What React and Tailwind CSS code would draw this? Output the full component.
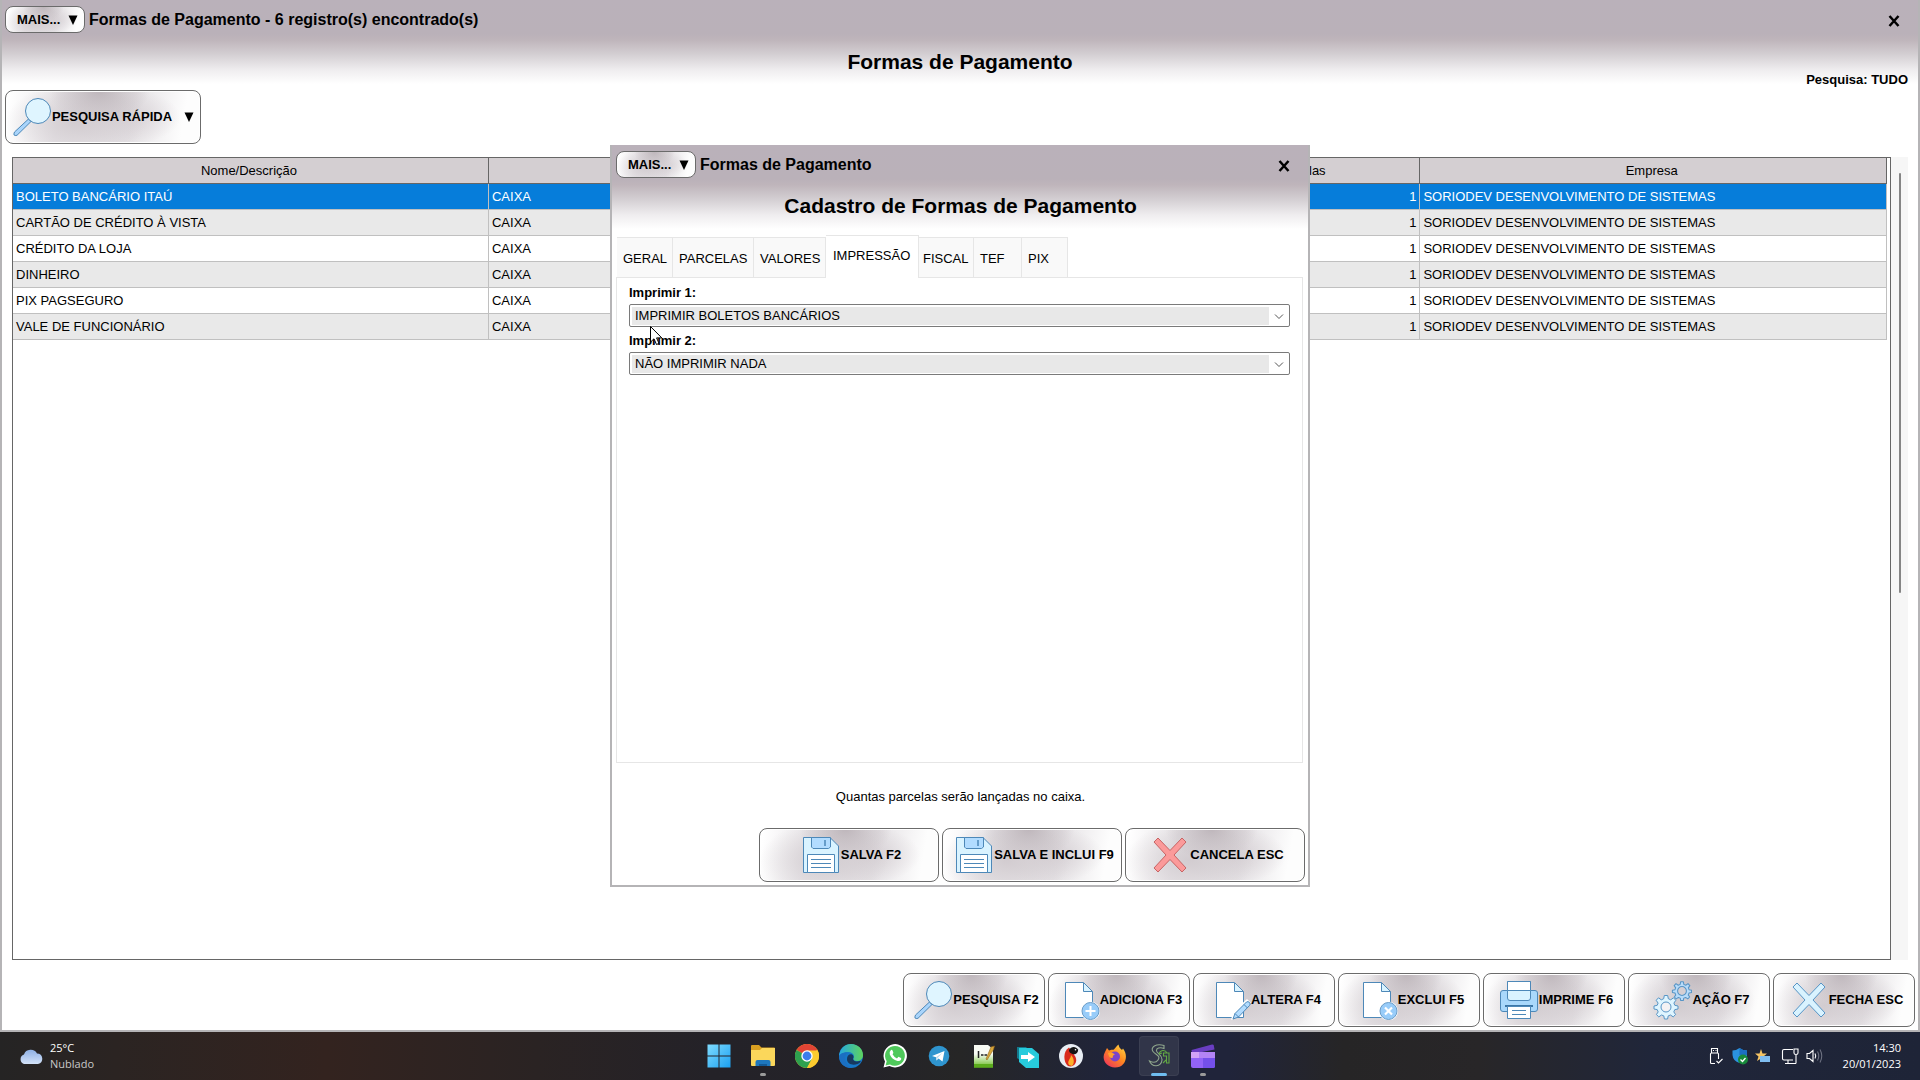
import { useState } from 'react';
import { clsx } from 'clsx';

const GLOSS = 'bg-[radial-gradient(ellipse_26%_60%_at_48%_0%,#beb6bb_0%,transparent_100%),radial-gradient(ellipse_36%_75%_at_36%_60%,#d2ccd0_0%,transparent_100%),radial-gradient(ellipse_30%_55%_at_60%_50%,#d6d0d4_0%,transparent_100%),linear-gradient(100deg,#ffffff_2%,#e9e6e9_28%,#e6e3e6_64%,#fdfdfd_90%)]';
const HEADER_FADE = 'bg-[linear-gradient(#bab1ba_0px,#bab1b9_34px,#bfb5bb_40px,#d3ced2_54px,#efedef_70px,#ffffff_84px)]';

const rows = [
    'BOLETO BANCÁRIO ITAÚ',
    'CARTÃO DE CRÉDITO À VISTA',
    'CRÉDITO DA LOJA',
    'DINHEIRO',
    'PIX PAGSEGURO',
    'VALE DE FUNCIONÁRIO',
];

/* Button icons, all on a 40x40 grid */
const Magnifier = () => (
    <svg viewBox="0 0 40 40" className="size-10 shrink-0">
        <path d="M16.500 22 L2.500 35 Q0.500 39.500 5 38.300 L19 24.500 Z" fill="#a9d4fb" stroke="#4d88b8" strokeWidth="1" />
        <circle cx="26" cy="14" r="12.500" fill="#dff5ff" stroke="#4d88b8" strokeWidth="1" />
    </svg>
);

const Floppy = () => (
    <svg viewBox="0 0 40 40" className="size-10 shrink-0">
        <path d="M2.500 2.500 H29 L37.500 11 V37.500 H2.500 Z" fill="#d9f3ff" stroke="#4d88b8" />
        <path d="M10.500 2.500 H29.500 V12 L27.500 13.500 H12 L10.500 12 Z" fill="#b2dcff" stroke="#4d88b8" />
        <path d="M24 5 V11" stroke="#4d88b8" strokeWidth="1.500" />
        <path d="M6.500 19.500 H33.500 V37.500 H6.500 Z" fill="#ffffff" stroke="#4d88b8" />
        <path d="M10 24.500 H30 M10 28.500 H30 M10 32.500 H30" stroke="#4d88b8" />
    </svg>
);

const Cross = ({ fill, stroke }) => (
    <svg viewBox="0 0 40 40" className="size-10 shrink-0">
        <path
            d="M4 7 L8 3 L20 15.500 L32 3 L36 7 L24 20 L36 33 L32 37 L20 24.500 L8 37 L4 33 L16 20 Z"
            fill={fill}
            stroke={stroke}
            strokeLinejoin="round"
        />
    </svg>
);

const Page = ({ children }) => (
    <svg viewBox="0 0 40 40" className="size-10 shrink-0">
        <path d="M5.500 2.500 H23 L32.500 12 V37.500 H5.500 Z" fill="#ffffff" stroke="#4d88b8" />
        <path d="M23.500 2.500 V11.500 H32.500 Z" fill="#d9f3ff" stroke="#4d88b8" />
        {children}
    </svg>
);

const PageAdd = () => (
    <Page>
        <circle cx="30.500" cy="31" r="9.500" fill="#ffffff" />
        <circle cx="30.500" cy="31" r="8.500" fill="#98ccf9" stroke="#6a9cc7" />
        <path d="M25.500 31 H35.500 M30.500 26 V36" stroke="#ffffff" strokeWidth="2" />
    </Page>
);

const PageEdit = () => (
    <Page>
        <path d="M20 40 L22 32 L36 19 L40 23 L27 37 Z" fill="#ffffff" />
        <path d="M22 39 L24 33.500 L35.500 22 Q37 21 38.500 22.500 Q40 24 38.500 25.500 L27.500 37 Z" fill="#b2dcff" stroke="#4d88b8" />
        <path d="M24 33.500 L27.500 37 M33 24.500 L36.500 28" stroke="#4d88b8" />
    </Page>
);

const PageDelete = () => (
    <Page>
        <circle cx="30.500" cy="31" r="9.500" fill="#ffffff" />
        <circle cx="30.500" cy="31" r="8.500" fill="#98ccf9" stroke="#6a9cc7" />
        <path d="M27 27.500 L34 34.500 M34 27.500 L27 34.500" stroke="#ffffff" strokeWidth="2.200" />
    </Page>
);

const Printer = () => (
    <svg viewBox="0 0 40 40" className="size-10 shrink-0">
        <path d="M4 10.500 H36 Q38.500 10.500 38.500 13 V29 Q38.500 31.500 36 31.500 H4 Q1.500 31.500 1.500 29 V13 Q1.500 10.500 4 10.500 Z" fill="#a9d8fb" stroke="#4d88b8" />
        <path d="M8.500 1.500 H31.500 V18 Q31.500 20.500 29 20.500 H11 Q8.500 20.500 8.500 18 Z" fill="#d9f3ff" stroke="#4d88b8" />
        <path d="M8.500 1.500 H31.500 V10.500 H8.500 Z" fill="#ffffff" stroke="#4d88b8" />
        <path d="M6 26 H34" stroke="#3c76a6" strokeWidth="2" />
        <path d="M8.500 26.500 H31.500 V38.500 H8.500 Z" fill="#ffffff" stroke="#4d88b8" />
        <path d="M13 30.500 H27 M13 34.500 H27" stroke="#4d88b8" />
    </svg>
);

const GEAR = 'M-1.700 -11.500 H1.700 L2.300 -8.300 L4.700 -7.200 L7.500 -9.200 L9.800 -6.700 L7.900 -3.900 L8.800 -1.700 L12 -1 V2 L8.800 2.600 L7.800 4.900 L9.600 7.500 L7.200 9.900 L4.500 8 L2.200 8.900 L1.600 12 H-1.600 L-2.200 8.900 L-4.500 8 L-7.200 9.900 L-9.600 7.500 L-7.800 4.900 L-8.800 2.600 L-12 2 V-1 L-8.800 -1.700 L-7.900 -3.900 L-9.800 -6.700 L-7.500 -9.200 L-4.700 -7.200 L-2.300 -8.300 Z';

const Gears = () => (
    <svg viewBox="0 0 40 40" className="size-10 shrink-0" stroke="#5795c6" strokeLinejoin="round">
        <g transform="translate(14 27)">
            <path d={GEAR} fill="#dff5ff" />
            <circle r="5" fill="#f4f2f4" />
        </g>
        <g transform="translate(30 11) scale(0.800)">
            <path d={GEAR} fill="#b8dcfa" strokeWidth="1.300" />
            <circle r="5.500" fill="#d5cfd3" strokeWidth="1.300" />
        </g>
    </svg>
);

const Arrow = () => (
    <svg viewBox="0 0 10 10" className="size-[10px] shrink-0">
        <path d="M0.500 0.500 H9.500 L5 10 Z" fill="#000000" />
    </svg>
);

const ActionButton = ({ icon, label, menu, className }) => (
    <button
        type="button"
        className={clsx('flex h-[54px] items-center justify-center rounded-lg border border-[#6b6b6b] pl-1 text-[13px] font-bold whitespace-nowrap inset-ring-1 inset-ring-white', GLOSS, className)}
    >
        {icon}
        <span>{label}</span>
        {menu && <span className="mr-1 ml-3"><Arrow /></span>}
    </button>
);

const TitleBar = ({ title }) => (
    <div className="flex items-center justify-between pt-[6px]">
        <div className="flex items-center gap-1">
            <button
                type="button"
                className={clsx('flex h-[27px] w-20 items-center justify-between rounded-lg border border-[#6b6b6b] pr-[6px] pl-[11px] text-[13px] leading-none font-bold', GLOSS)}
            >
                MAIS...
                <Arrow />
            </button>
            <span className="text-base leading-5 font-bold">{title}</span>
        </div>
        <button type="button" aria-label="Fechar" className="mr-[15px] pt-[2px]">
            <svg viewBox="0 0 12 12" className="size-3">
                <path d="M1.500 1 L10.500 11 M10.500 1 L1.500 11" stroke="#000000" strokeWidth="2.500" />
            </svg>
        </button>
    </div>
);

const PrintSelect = ({ id, label, value }) => (
    <div>
        <label htmlFor={id} className="block h-5 text-[13px] leading-[18px] font-bold">{label}</label>
        <div className="mb-[5px] flex h-[23px] items-center rounded-xs border border-[#7a7a7a] bg-white p-[2px]">
            <select id={id} defaultValue={value} className="h-[18px] min-w-0 flex-1 appearance-none bg-[#e8e8e8] pl-[3px] text-[13px] leading-4 outline-none">
                <option>{value}</option>
            </select>
            <svg viewBox="0 0 18 18" className="pointer-events-none size-[18px]" fill="none">
                <path d="M6 7.500 L10 11.500 L14 7.500" stroke="#555555" />
            </svg>
        </div>
    </div>
);

const tabs = [
    { name: 'GERAL', width: 'w-[56px] pl-[6px]' },
    { name: 'PARCELAS', width: 'w-[81px] pl-[6px]' },
    { name: 'VALORES', width: 'w-[72px] pl-[6px]' },
    { name: 'IMPRESSÃO', width: 'w-[93px] pl-[7px]' },
    { name: 'FISCAL', width: 'w-[55px] pl-1' },
    { name: 'TEF', width: 'w-[48px] pl-[6px]' },
    { name: 'PIX', width: 'w-[46px] pl-[6px]' },
];

const FormDialog = () => {
    const [tab, setTab] = useState('IMPRESSÃO');

    return (
        <div role="dialog" aria-label="Formas de Pagamento" className={clsx('relative flex w-[700px] flex-col border-x-2 border-b-2 border-[#b5b4b6] bg-white pr-[3px] pl-1', HEADER_FADE)}>
            <TitleBar title="Formas de Pagamento" />
            <h2 className="mt-4 text-center text-[21px] leading-6 font-bold">Cadastro de Formas de Pagamento</h2>

            {/* Tabs */}
            <div role="tablist" className="mt-[17px] ml-px flex h-[42px] items-end">
                {tabs.map((t) => (
                    <button
                        key={t.name}
                        type="button"
                        role="tab"
                        aria-selected={tab === t.name}
                        onClick={() => setTab(t.name)}
                        className={clsx(
                            'border-t border-r border-[#e6e6e6] text-left text-[13px]',
                            t.width,
                            tab === t.name ? 'z-10 -mb-px h-[43px] bg-white pb-[2px]' : 'h-10 bg-[#f9f9f9] pt-[2px]'
                        )}
                    >
                        {t.name}
                    </button>
                ))}
            </div>
            <div className="mr-[2px] min-h-[486px] border border-[#e6e6e6] px-3 pt-[6px]">
                <PrintSelect id="imprimir1" label="Imprimir 1:" value="IMPRIMIR BOLETOS BANCÁRIOS" />
                <PrintSelect id="imprimir2" label="Imprimir 2:" value="NÃO IMPRIMIR NADA" />
            </div>

            <p className="mt-6 text-center text-[13px] leading-5">Quantas parcelas serão lançadas no caixa.</p>
            <div className="mt-[21px] mb-[3px] flex justify-end gap-[3px]">
                <ActionButton className="w-[180px]" icon={<Floppy />} label="SALVA F2" />
                <ActionButton className="w-[180px]" icon={<Floppy />} label="SALVA E INCLUI F9" />
                <ActionButton className="w-[180px]" icon={<Cross fill="#fb9a9a" stroke="#c76464" />} label="CANCELA ESC" />
            </div>

            {/* Mouse pointer */}
            <svg viewBox="0 0 13 20" className="pointer-events-none absolute top-[181px] left-[38px] h-5 w-[13px]">
                <path d="M0.500 0.500 V16 L4 12.800 L6.500 18.500 L9 17.400 L6.600 11.900 H11.800 Z" fill="#ffffff" stroke="#000000" />
            </svg>
        </div>
    );
};

/* Taskbar icons, all on a 24x24 grid */
const TaskIcon = ({ children }) => (
    <svg viewBox="0 0 24 24" className="size-6">{children}</svg>
);

const apps = [
    {
        name: 'Iniciar',
        icon: (
            <TaskIcon>
                <defs>
                    <linearGradient id="win" x1="0" y1="0" x2="1" y2="1">
                        <stop offset="0" stopColor="#7fdcff" />
                        <stop offset="1" stopColor="#1ba0f0" />
                    </linearGradient>
                </defs>
                <path d="M0.500 0.500 H11.500 V11.500 H0.500 Z M12.500 0.500 H23.500 V11.500 H12.500 Z M0.500 12.500 H11.500 V23.500 H0.500 Z M12.500 12.500 H23.500 V23.500 H12.500 Z" fill="url(#win)" />
            </TaskIcon>
        ),
    },
    {
        name: 'Explorador de Arquivos',
        open: true,
        icon: (
            <TaskIcon>
                <path d="M0 2 Q0 1 1 1 H8 L10.500 3.500 H23 Q24 3.500 24 4.500 V10 H0 Z" fill="#d9a021" />
                <path d="M0 6 H9 L11 4 H24 V21 Q24 22 23 22 H1 Q0 22 0 21 Z" fill="#fbd75b" />
                <path d="M4.500 22 V18 Q4.500 16 6.500 16 H17.500 Q19.500 16 19.500 18 V22 Z" fill="#1e77bd" />
                <path d="M8 22 V20 H16 V22 Z" fill="#135a96" />
            </TaskIcon>
        ),
    },
    {
        name: 'Chrome',
        icon: (
            <TaskIcon>
                <circle cx="12" cy="12" r="12" fill="#fccb2f" />
                <path d="M12 12 L1.600 6 A12 12 0 0 1 22.400 6 Z" fill="#e04434" />
                <path d="M12 12 L1.600 6 A12 12 0 0 0 12 24 L17 15 Z" fill="#2ea14f" />
                <path d="M12 6.500 H22.700 A12 12 0 0 1 12 24 L16.800 15 Z" fill="#fccb2f" />
                <circle cx="12" cy="12" r="5.700" fill="#ffffff" />
                <circle cx="12" cy="12" r="4.400" fill="#3b7ded" />
            </TaskIcon>
        ),
    },
    {
        name: 'Edge',
        icon: (
            <TaskIcon>
                <defs>
                    <linearGradient id="edge" x1="0" y1="0" x2="1" y2="0">
                        <stop offset="0" stopColor="#25a8e0" />
                        <stop offset="1" stopColor="#5fd45c" />
                    </linearGradient>
                </defs>
                <circle cx="12" cy="12" r="12" fill="#1677c8" />
                <path d="M0 12 C1 4 6 0 12 0 C19 0 24 5 24 11 C24 15 21 17 18 17 C15 17 14 16 14.500 14.500 C16 12 14 8 9.500 8 C5 8 1.500 10 0 12 Z" fill="url(#edge)" />
                <path d="M8 15 C8 11.500 10 10 12.500 10.300 C14.500 11 15 13 14 14.800 C14 17 17 18 20.500 17 C21.500 17 22 17.500 21.500 18 C18 22 8 22 8 15 Z" fill="#17395f" />
                <path d="M0 12 C1.500 9 5 8 9 8.500 C4.500 11 4.500 20 13 24 C5 24 0 19 0 12 Z" fill="#1b6fc2" />
            </TaskIcon>
        ),
    },
    {
        name: 'WhatsApp',
        icon: (
            <TaskIcon>
                <path d="M0.500 23.500 L2 17.500 A11.700 11.700 0 1 1 6.500 22 Z" fill="#ffffff" />
                <path d="M2.600 21.500 L3.700 17.300 A9.900 9.900 0 1 1 7 20.400 Z" fill="#4fc95b" />
                <path d="M8 6 Q9 5.500 9.500 6.500 L10.300 8.500 Q10.500 9 9.500 10.200 Q11 13 14 14.400 L15.200 13 Q15.600 12.700 16 12.900 L18 14 Q18.500 14.500 18 15.700 Q17 17.500 14.500 17 Q9 15.500 6.800 10.500 Q6 7.500 8 6 Z" fill="#ffffff" />
            </TaskIcon>
        ),
    },
    {
        name: 'Telegram',
        icon: (
            <TaskIcon>
                <circle cx="12" cy="12" r="10.300" fill="#2f95cf" />
                <path d="M5 12 L17.500 7 L15.500 17.500 L11.500 14.500 L9.500 16.500 L9 13.300 Z" fill="#ffffff" />
                <path d="M9 13.300 L15.500 8.800 L10.600 14 L9.500 16.500 Z" fill="#b9d9ec" />
            </TaskIcon>
        ),
    },
    {
        name: 'Notepad++',
        icon: (
            <TaskIcon>
                <defs>
                    <linearGradient id="npp" x1="0" y1="0" x2="0" y2="1">
                        <stop offset="0.400" stopColor="#f8fbf4" />
                        <stop offset="1" stopColor="#68bd23" />
                    </linearGradient>
                </defs>
                <path d="M3 1 H17 L22 5 V23.500 H3 Z" fill="url(#npp)" />
                <path d="M3 20 H22 V23.500 H3 Z" fill="#5bac1c" />
                <path d="M7.500 7 V14 M10 11 H12.500 M13.500 11 H16" stroke="#222222" strokeWidth="1.500" />
                <path d="M15 15 L20 3 L23.500 2 L22.500 5.500 L16 16 Z" fill="#d8a83c" stroke="#93651b" strokeWidth="0.600" />
            </TaskIcon>
        ),
    },
    {
        name: 'Acesso remoto',
        icon: (
            <TaskIcon>
                <path d="M2 3 H11 L15 7 V18 H7 L2 14 Z" fill="#15788c" />
                <path d="M4 4 H17 L24 10 V24 H11 L4 18 Z" fill="#27cbdc" />
                <path d="M6 11 H13 V8 L20 13 L13 18 V15 H6 Z" fill="#ffffff" />
            </TaskIcon>
        ),
    },
    {
        name: 'Fênix',
        icon: (
            <TaskIcon>
                <circle cx="12" cy="12" r="12" fill="#e8edf3" />
                <path d="M10 3.500 C4 7 4 18 9 22 C15 24 19 18 16.500 13 L14 9 Z" fill="#d92a1c" />
                <path d="M10 21 C7.500 17 12 15 12 11 C15 14 16 19 13 22 Z" fill="#fcb12a" />
                <path d="M10 6 C12 2 17 2 19 5.500 C19.500 9 16 11 13.500 10 C11 9 10 8 10 6 Z" fill="#141414" />
                <circle cx="16.500" cy="5.700" r="0.800" fill="#ffffff" />
            </TaskIcon>
        ),
    },
    {
        name: 'Firefox',
        icon: (
            <TaskIcon>
                <defs>
                    <linearGradient id="fox" x1="1" y1="0" x2="0.200" y2="1">
                        <stop offset="0" stopColor="#ffe14a" />
                        <stop offset="0.500" stopColor="#ff8a1f" />
                        <stop offset="1" stopColor="#f0355b" />
                    </linearGradient>
                </defs>
                <path d="M4 4 L6 6.500 C8 5.500 9 5.500 10.500 5.800 C12 4.500 13 2.500 15.500 0.500 C16 3 17 4.500 19 6 L20 4.500 C26 12 22.500 23.500 12 23.500 C3 23.500 -2 15 2 8 Z" fill="url(#fox)" />
                <circle cx="12" cy="12.500" r="5" fill="#7b43c8" />
                <path d="M5 9 C8 8 10 9 12 10.500 C10 11 9.500 12 10 13.500 C8 15 5.500 13 5 9 Z" fill="#ffa12e" />
            </TaskIcon>
        ),
    },
    {
        name: 'Sistema',
        active: true,
        icon: (
            <TaskIcon>
                <path d="M17 1.500 C9 -1 3 3.500 6 7.500 C8.500 11 14 11.500 11 16 C9 19 5.500 18.500 2.500 17 C5 23.500 14 23.500 15 16 C15.500 11 10 9.500 9.500 7 C9 4 13 3 17 4.500 Z" fill="none" stroke="#8fa68c" strokeWidth="1.100" />
                <path d="M12 10 C13 6 18 5 20 9 M12 10 L15 9 M16.500 9 H22 V19 H19.500 V12 H16.500 Z M16 19 L19 16" fill="none" stroke="#62a843" strokeWidth="1.100" />
            </TaskIcon>
        ),
    },
    {
        name: 'Clipchamp',
        open: true,
        icon: (
            <TaskIcon>
                <path d="M0.500 6 L21 0.500 Q22.500 0.200 22.800 1.500 L23.500 5.500 L1 10 Z" fill="#6a3ec2" />
                <path d="M0 9.500 Q0 8 1.500 8 H22.500 Q24 8 24 9.500 V22 Q24 24 22 24 H2 Q0 24 0 22 Z" fill="#9263f7" />
                <path d="M0 8 H12 V14 H0 Z" fill="#d3a3f7" />
                <path d="M8 8 H24 V14 H8 Z" fill="#b384f5" />
                <path d="M12 14 H24 V22 Q24 24 22 24 H12 Z" fill="#7450ea" />
            </TaskIcon>
        ),
    },
];

const Taskbar = () => (
    <footer className="relative flex h-12 items-center justify-between bg-[linear-gradient(90deg,#252424_0%,#2b2422_6%,#33231f_17%,#2a2323_28%,#242228_37%,#242329_45%,#262626_50%,#20243a_58%,#20243a_64%,#262526_70%,#282628_77%,#20263a_86%,#1e2437_100%)] text-[11px] leading-4 text-white" style={{ fontFamily: '"Open Sans", "Noto Sans", sans-serif' }}>
        <div className="flex items-center gap-[7px] pl-[19px]">
            <svg viewBox="0 0 24 16" className="h-4 w-6">
                <defs>
                    <linearGradient id="cloud" x1="0" y1="0" x2="0" y2="1">
                        <stop offset="0" stopColor="#8fb0e4" />
                        <stop offset="1" stopColor="#d3e2f8" />
                    </linearGradient>
                </defs>
                <path d="M5 16 A5 5 0 0 1 5 6.500 A7 6.500 0 0 1 18 5.500 A5.300 5.300 0 0 1 19 16 Z" fill="url(#cloud)" />
            </svg>
            <div>
                <div>25°C</div>
                <div className="text-[#c9c9c9]">Nublado</div>
            </div>
        </div>

        <nav className="absolute inset-x-0 flex justify-center">
            {apps.map((app) => (
                <div key={app.name} className="w-11 pl-[3px]">
                    <button
                        type="button"
                        aria-label={app.name}
                        className={clsx('relative flex h-10 w-10 items-center justify-center rounded', app.active && 'bg-white/8 inset-ring-1 inset-ring-white/5')}
                    >
                        {app.icon}
                        {app.active && <span className="absolute bottom-0 h-[3px] w-4 rounded-full bg-[#6fbdf0]"></span>}
                        {app.open && <span className="absolute bottom-0 h-[3px] w-[6px] rounded-full bg-[#9b9b9b]"></span>}
                    </button>
                </div>
            ))}
        </nav>

        <div className="flex items-center pr-[19px]">
            <svg viewBox="0 0 114 18" className="mr-5 h-[18px] w-[114px]" fill="none" stroke="#ffffff" strokeWidth="1.100">
                {/* USB */}
                <path d="M2.500 6 V1.500 H8.500 V6 M4 3.500 H5 M6.500 3.500 H7.500 M6 16.500 H2.500 Q1.500 16.500 1.500 15.500 V7 Q1.500 6 2.500 6 H8.500 Q9.500 6 9.500 7 V12 M7.500 14 L9.500 16 L13.500 12" />
                {/* Shield */}
                <g stroke="none">
                    <path d="M30.500 1 Q34 3.500 38 3.500 V8 Q37 14 30.500 16 Q24 14 23.500 8 V3.500 Q27 3.500 30.500 1 Z" fill="#2b93df" />
                    <path d="M30.500 1 Q34 3.500 38 3.500 V8 H30.500 Z" fill="#1c6fc1" />
                    <circle cx="34" cy="12.500" r="5" fill="#188a3b" />
                </g>
                <path d="M31.500 12.500 L33.500 14.500 L36.500 11" strokeWidth="1.300" />
                {/* Star */}
                <g stroke="none">
                    <path d="M52 2 L53.500 6.500 H58 L54.500 9.500 L56 14 L52 11.500 L48 14 L49.500 9.500 L46 6.500 H50.500 Z" fill="#f5c464" />
                    <path d="M51 9 H61 V15 H51 Z" fill="#7fbdf0" />
                </g>
                {/* Network */}
                <path d="M84 2.500 H75 Q73.500 2.500 73.500 4 V11.500 Q73.500 13 75 13 H84 M79 13 V16.500 M76 16.500 H87 M85 2 H89 V6 Q89 7.500 87 7.500 Q85 7.500 85 6 Z M87 7.500 V16.500" />
                {/* Volume */}
                <path d="M98 6.500 H100.500 L104 3.500 V14.500 L100.500 11.500 H98 Z M106 6.500 Q107.500 9 106 11.500" />
                <path d="M108.500 4.500 Q111 9 108.500 13.500 M111 2.500 Q114.500 9 111 15.500" stroke="#6d7180" />
            </svg>
            <div className="text-right">
                <div>14:30</div>
                <div>20/01/2023</div>
            </div>
        </div>
    </footer>
);

const App = () => {
    const [selected, setSelected] = useState(0);

    return (
        <div className="flex min-h-screen flex-col bg-white text-black" style={{ fontFamily: '"Liberation Sans", Arial, sans-serif' }}>
            <main className={clsx('relative flex flex-1 flex-col border-x-2 border-b-2 border-[#b5b4b6] px-[3px]', HEADER_FADE)}>
                <TitleBar title="Formas de Pagamento - 6 registro(s) encontrado(s)" />
                <h1 className="mt-[17px] text-center text-[21px] leading-6 font-bold">Formas de Pagamento</h1>
                <div className="pr-[7px] pb-1 text-right text-[13px] leading-3 font-bold">Pesquisa: TUDO</div>
                <ActionButton className="w-[196px] self-start" icon={<Magnifier />} label="PESQUISA RÁPIDA" menu />

                {/* Grid */}
                <div className="mx-[7px] mt-[13px] flex flex-1">
                    <div className="min-w-0 flex-1 border border-[#666666] pr-[3px]">
                        <table className="w-full table-fixed border-separate border-spacing-0 text-[13px] leading-5">
                            <colgroup>
                                <col className="w-[25.4%]" />
                                <col />
                                <col className="w-[12.6%]" />
                                <col className="w-[24.9%]" />
                            </colgroup>
                            <thead>
                                <tr className="h-[26px] bg-[#d4cfd2]">
                                    {['Nome/Descrição', '', 'Parcelas', 'Empresa'].map((h) => (
                                        <th key={h} className="border-r border-b border-[#666666] p-0 pr-[3px] font-normal">{h}</th>
                                    ))}
                                </tr>
                            </thead>
                            <tbody>
                                {rows.map((name, i) => (
                                    <tr
                                        key={name}
                                        onClick={() => setSelected(i)}
                                        className={clsx('h-[26px]', selected === i ? 'bg-[#067dda] text-white' : i % 2 ? 'bg-[#e9e9e9]' : 'bg-white')}
                                    >
                                        <td className="border-r border-b border-[#c0c0c0] px-[3px] pt-px pb-0">{name}</td>
                                        <td className="border-r border-b border-[#c0c0c0] px-[3px] pt-px pb-0">CAIXA</td>
                                        <td className="border-r border-b border-[#c0c0c0] px-[3px] pt-px pb-0 text-right">1</td>
                                        <td className="border-r border-b border-[#c0c0c0] px-[3px] pt-px pb-0">SORIODEV DESENVOLVIMENTO DE SISTEMAS</td>
                                    </tr>
                                ))}
                            </tbody>
                        </table>
                    </div>
                    <div className="flex w-[17px] justify-center bg-[#f6f6f6] pt-4">
                        <div className="h-[420px] w-[2px] rounded-full bg-[#858585]"></div>
                    </div>
                </div>

                <div className="mt-[13px] mb-[3px] flex justify-end gap-[3px]">
                    <ActionButton className="w-[142px]" icon={<Magnifier />} label="PESQUISA F2" />
                    <ActionButton className="w-[142px]" icon={<PageAdd />} label="ADICIONA F3" />
                    <ActionButton className="w-[142px]" icon={<PageEdit />} label="ALTERA F4" />
                    <ActionButton className="w-[142px]" icon={<PageDelete />} label="EXCLUI F5" />
                    <ActionButton className="w-[142px]" icon={<Printer />} label="IMPRIME F6" />
                    <ActionButton className="w-[142px]" icon={<Gears />} label="AÇÃO F7" />
                    <ActionButton className="w-[142px]" icon={<Cross fill="#d9f3ff" stroke="#5795c6" />} label="FECHA ESC" />
                </div>

                <div className="absolute inset-0 flex items-center justify-center pt-[2px]">
                    <FormDialog />
                </div>
            </main>
            <Taskbar />
        </div>
    );
};

export default App;
